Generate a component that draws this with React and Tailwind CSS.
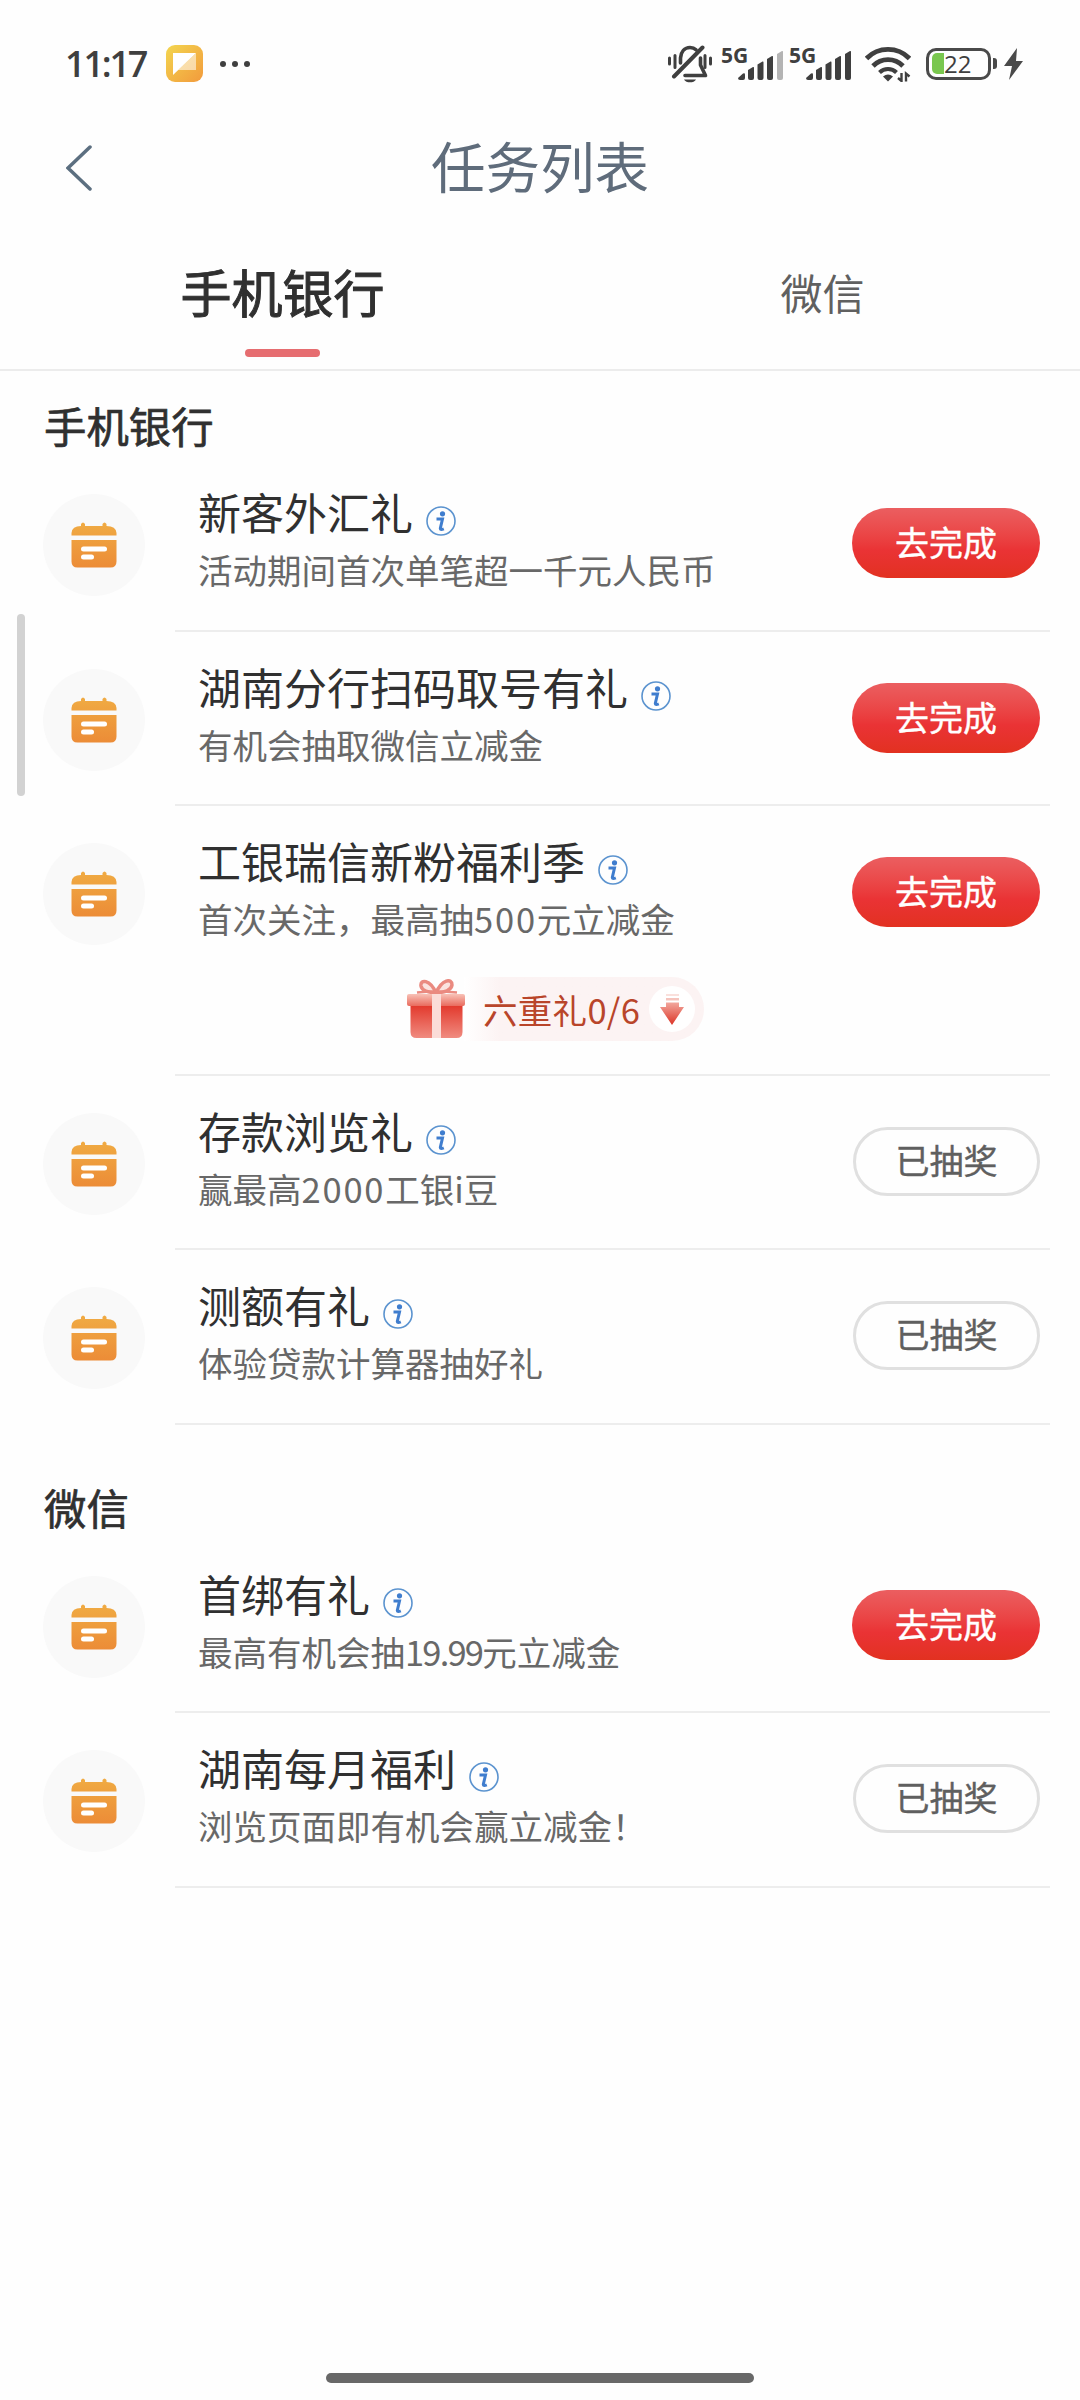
import React from 'react';

const sections = [
  {
    title: '手机银行',
    tasks: [
      { name: '新客外汇礼', desc: '活动期间首次单笔超一千元人民币', done: false },
      { name: '湖南分行扫码取号有礼', desc: '有机会抽取微信立减金', done: false },
      { name: '工银瑞信新粉福利季', desc: '首次关注，最高抽500元立减金', done: false, gift: '六重礼0/6' },
      { name: '存款浏览礼', desc: '赢最高2000工银i豆', done: true },
      { name: '测额有礼', desc: '体验贷款计算器抽好礼', done: true },
    ],
  },
  {
    title: '微信',
    tasks: [
      { name: '首绑有礼', desc: '最高有机会抽19.99元立减金', done: false },
      { name: '湖南每月福利', desc: '浏览页面即有机会赢立减金！', done: true },
    ],
  },
];

const BellOff = () => (
  <svg width="44" height="38" viewBox="0 0 44 38" fill="none" stroke="#3f3f3f" strokeWidth="3.600" strokeLinecap="round">
    <path d="M1.500 13v6M7 10.500v12M37 10.500v12M42.500 13v6" strokeWidth="3" />
    <path d="M12.500 18V13C13 7 16.500 2.500 22 2.500c2.500 0 4.500.8 6 2.300M32.500 13v7l5 10.500H17" strokeLinejoin="round" />
    <path d="M6 31.500L34.500 2.500" strokeWidth="4" />
    <path d="M16 34.500h12c-2 3.800-10 3.800-12 0z" fill="#3f3f3f" stroke="none" />
  </svg>
);

const Signal = ({ weak }) => (
  <div className="relative h-[34px] w-[63px]">
    <span className="absolute -top-[2px] left-0 font-['Open_Sans'] text-[21px] leading-[21px] font-bold text-[#3f3f3f]">5G</span>
    <svg className="absolute top-0 left-[17px]" width="46" height="34" viewBox="0 0 46 34" fill="#3f3f3f">
      <path d="M0 31l5-4.500q2-1 2 1V31q0 2-2 2H2q-2 0-2-2z" />
      <path d="M10 23l5-3q1-.5 1 1v10q0 2-2 2h-2q-2 0-2-2z" />
      <path d="M19.500 17.500l5-3q1-.5 1 1V31q0 2-2 2h-2q-2 0-2-2z" />
      <path d="M29 12l5-3q1-.5 1 1v21q0 2-2 2h-2q-2 0-2-2z" />
      <path d="M39 7l5-3q1-.5 1 1v26q0 2-2 2h-2q-2 0-2-2z" fill={weak ? '#b4b4b4' : '#3f3f3f'} />
    </svg>
  </div>
);

const Wifi = () => (
  <svg width="46" height="36" viewBox="0 0 46 36" fill="none" stroke="#3f3f3f" strokeWidth="4.800">
    <path d="M1.500 12.500a30 30 0 0 1 43 0" />
    <path d="M8 20a21 21 0 0 1 30 0" />
    <path d="M14.500 26.500a12 12 0 0 1 17 0" strokeWidth="4" />
    <path d="M18 30.500q5-4 10 0l-5 5z" fill="#3f3f3f" stroke="none" />
    <path d="M36.500 27v8l-3.500-3M41 35.500v-8l3.500 3" strokeWidth="2.400" />
  </svg>
);

const StatusBar = () => (
  <div className="flex h-[126px] items-center pl-[65px] text-[#3f3f3f]">
    <span className="w-[83px] pt-[2px] font-['Open_Sans'] text-[36px] leading-none font-semibold tracking-[-2.2px]">11:17</span>
    <svg className="ml-[18px]" width="37" height="37" viewBox="0 0 37 37">
      <defs>
        <linearGradient id="app" x1="0" y1="0" x2="1" y2="1">
          <stop offset="0" stopColor="#f3d64f" />
          <stop offset="1" stopColor="#f29a3c" />
        </linearGradient>
      </defs>
      <rect width="37" height="37" rx="9" fill="url(#app)" />
      <path d="M7 8h23L7 30z" fill="#fff" />
      <path d="M30 8v17H12z" fill="#fff" opacity=".55" />
    </svg>
    <div className="ml-[17px] flex gap-[6px] pt-[2px]">
      <i className="size-[6px] rounded-full bg-[#3f3f3f]" />
      <i className="size-[6px] rounded-full bg-[#3f3f3f]" />
      <i className="size-[6px] rounded-full bg-[#3f3f3f]" />
    </div>
    <div className="ml-auto flex items-center pt-[1px] pr-[57px]">
      <BellOff />
      <div className="ml-[9px] flex gap-[5px]">
        <Signal weak />
        <Signal />
      </div>
      <div className="ml-[13px]"><Wifi /></div>
      <div className="ml-[15px] flex h-[32px] w-[65px] items-center rounded-[10px] border-[3px] border-[#4a4a4a] pl-[3px]">
        <span className="h-[21px] w-[12px] rounded-l-[5px] bg-[#7ac74f]" />
        <span className="font-['Open_Sans'] text-[24px] leading-none font-medium">22</span>
      </div>
      <span className="ml-[2px] h-[11px] w-[4px] rounded-r-[3px] bg-[#4a4a4a]" />
      <svg className="ml-[7px]" width="19" height="32" viewBox="0 0 19 32" fill="#4a4a4a">
        <path d="M13 0L0 18h8L5 32l14-19h-7z" />
      </svg>
    </div>
  </div>
);

const TaskIcon = () => (
  <div className="flex size-[102px] items-center justify-center rounded-full bg-[#f9f9f9]">
    <svg width="46" height="46" viewBox="0 0 46 46">
      <defs>
        <linearGradient id="cal" x1="0" y1="0" x2="0" y2="1">
          <stop offset="0" stopColor="#f0ab43" />
          <stop offset="1" stopColor="#ec8c37" />
        </linearGradient>
      </defs>
      <path
        d="M10 4V2q2-3 4 0v2h17.500V2q2-3 4 0v2q9.500 0 10 7v2.500H.5V11Q1 4 10 4zM.5 18h45v21.500q0 6-6 6h-33q-6 0-6-6z"
        fill="url(#cal)"
      />
      <rect x="10" y="24.500" width="26" height="5" rx="2.500" fill="#fff" />
      <rect x="10" y="32.500" width="13" height="5" rx="2.500" fill="#fff" />
    </svg>
  </div>
);

const InfoIcon = () => (
  <svg width="30" height="30" viewBox="0 0 30 30" fill="none">
    <circle cx="15" cy="15" r="14" stroke="#5b93cf" strokeWidth="1.600" />
    <circle cx="16.500" cy="7.800" r="2.600" fill="#3f7dce" />
    <path d="M10.500 13h6l-2.200 9.500q0 1.800 3.500.3" stroke="#3f7dce" strokeWidth="3" />
  </svg>
);

const GiftBox = () => (
  <svg width="60" height="60" viewBox="0 0 60 60" fill="none">
    <defs>
      <linearGradient id="box" x1="0" y1="0" x2="0" y2="1">
        <stop offset="0" stopColor="#e2382b" />
        <stop offset="1" stopColor="#f08b80" />
      </linearGradient>
      <linearGradient id="lid" x1="0" y1="0" x2="0" y2="1">
        <stop offset="0" stopColor="#f8c2b7" />
        <stop offset="1" stopColor="#e96b5d" />
      </linearGradient>
    </defs>
    <path d="M30 14C24 0 14 0 15 7q1 6 15 7C36 0 46-1 46 6q-1 7-16 8z" fill="#fbe3df" stroke="#ea8a80" strokeWidth="3.500" />
    <path d="M11 13.500q19-2 40 0" stroke="#ea8a80" strokeWidth="2.500" />
    <path d="M4.500 26h52v27q0 6-6 6h-40q-6 0-6-6z" fill="url(#box)" />
    <path d="M1 17q0-2 2-2h54q2 0 2 2v8q0 2-2 2H3q-2 0-2-2z" fill="url(#lid)" />
    <path d="M26 15h9v44h-9z" fill="#fbdcd8" />
  </svg>
);

const GiftProgress = ({ text }) => (
  <div className="mt-[37px] ml-[231px] flex h-[64px] w-[300px] items-center">
    <div className="z-10 shrink-0"><GiftBox /></div>
    <div className="-ml-[2px] flex h-[64px] w-[240px] shrink-0 items-center rounded-r-full bg-linear-to-r from-white via-[#fcf3f3] via-15% to-[#fcf3f3] pl-[19px]">
      <span className="w-[157px] text-[34.5px] leading-none tracking-[0.3px] whitespace-nowrap text-[#b9452a]">{text}</span>
      <span className="ml-[9px] flex size-[46px] items-center justify-center rounded-full bg-white">
        <svg width="24" height="32" viewBox="0 0 24 32">
          <defs>
            <linearGradient id="arr" x1="0" y1="0" x2="0" y2="1">
              <stop offset="0" stopColor="#f2a79d" />
              <stop offset="1" stopColor="#dc3426" />
            </linearGradient>
          </defs>
          <path d="M6 1h13v2H6z" fill="#fae0dc" />
          <path d="M6 5h13v2.500H6z" fill="#f5c4bd" />
          <path d="M6 9.500h13V14h5L12 32 0 14h6z" fill="url(#arr)" />
        </svg>
      </span>
    </div>
  </div>
);

// amounts are spaced apart from the surrounding characters, decimals are set tighter
const Desc = ({ text }) => (
  <p className="mt-[11px] text-[34.5px] leading-[44px] whitespace-nowrap text-[#686868]">
    {text.split(/([\d.]+)/).map((part, i) =>
      i % 2 ? (
        <span key={i} className={part.includes('.') ? 'tracking-[-1.8px]' : 'tracking-[1.8px]'}>{part}</span>
      ) : (
        part
      )
    )}
  </p>
);

const TaskRow = ({ task }) => (
  <div className="flex pl-[43px]">
    <div className="mt-[37px]"><TaskIcon /></div>
    <div className={`ml-[30px] w-[875px] border-b-2 border-[#ededed] ${task.gift ? 'h-[269.4px]' : 'h-[174.6px]'}`}>
      <div className="flex items-start pr-[10px] pl-[23px]">
        <div className="mt-[29px]">
          <div className="flex">
            <h3 className="text-[43px] leading-[50px] whitespace-nowrap text-[#303030]">{task.name}</h3>
            <span className="mt-[20px] ml-[13px]"><InfoIcon /></span>
          </div>
          <Desc text={task.desc} />
        </div>
        {task.done ? (
          <button className="mt-[51px] ml-auto h-[69px] w-[187px] shrink-0 rounded-full border-[3px] border-[#e0e0e0] pb-[3px] text-[34px] leading-none text-[#5f5f5f] [-webkit-text-stroke:0.4px]">
            已抽奖
          </button>
        ) : (
          <button className="mt-[51px] ml-auto h-[70px] w-[188px] shrink-0 rounded-full bg-linear-to-b from-[#eb5e60] via-[#ea3335] via-60% to-[#e23120] pb-[2px] text-[34px] leading-none text-white [-webkit-text-stroke:0.4px]">
            去完成
          </button>
        )}
      </div>
      {task.gift && <GiftProgress text={task.gift} />}
    </div>
  </div>
);

const SectionTitle = ({ children }) => (
  <h2 className="pl-[44px] text-[42.4px] leading-[56px] text-[#303030] [-webkit-text-stroke:0.7px]">{children}</h2>
);

export default function App() {
  return (
    <div className="relative h-[2400px] w-[1080px] overflow-hidden bg-[#fefefe] font-['Noto_Sans_CJK_SC',sans-serif]">
      <StatusBar />

      {/* Title bar */}
      <div className="flex h-[84px] items-center pl-[66px]">
        <svg width="26" height="46" viewBox="0 0 26 46" fill="none" stroke="#5c6f80" strokeWidth="3.500" strokeLinecap="round">
          <path d="M24 2L2 23l22 21" />
        </svg>
        <h1 className="flex-1 pr-[92px] pb-[6px] text-center text-[54.5px] leading-none text-[#5f6c7b]">任务列表</h1>
      </div>

      {/* Tabs */}
      <div className="flex h-[161px] border-b-2 border-[#ececec]">
        <div className="flex w-[565px] flex-col items-center pt-[53px]">
          <span className="text-[51px] leading-[56px] text-[#303030] [-webkit-text-stroke:1px]">手机银行</span>
          <span className="mt-[30px] h-[8px] w-[75px] rounded-full bg-[#e66d70]" />
        </div>
        <div className="flex-1 pt-[54px] text-center text-[42px] leading-[56px] text-[#606060]">微信</div>
      </div>

      {/* Task sections */}
      <div className="pt-[26px]">
        <SectionTitle>{sections[0].title}</SectionTitle>
        <div className="mt-[4px]">
          {sections[0].tasks.map((task) => <TaskRow key={task.name} task={task} />)}
        </div>
      </div>
      <div className="pt-[54px]">
        <SectionTitle>{sections[1].title}</SectionTitle>
        <div className="mt-[4px]">
          {sections[1].tasks.map((task) => <TaskRow key={task.name} task={task} />)}
        </div>
      </div>

      {/* Edge handle and home indicator */}
      <div className="absolute top-[614px] left-[17px] h-[182px] w-[8px] rounded-full bg-[#d2d2d2]" />
      <div className="absolute top-[2373px] left-[326px] h-[10px] w-[428px] rounded-full bg-[#686868]" />
    </div>
  );
}
